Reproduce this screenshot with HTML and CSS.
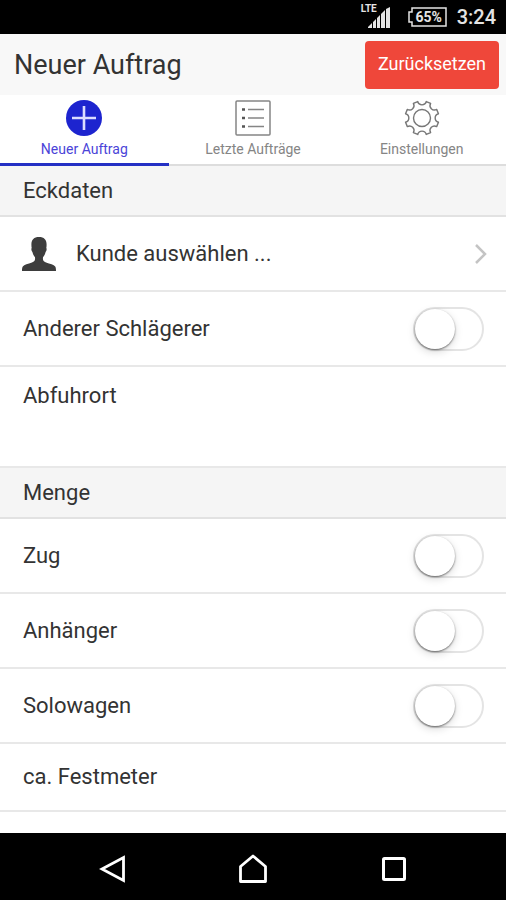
FILE: index.html
```html
<!DOCTYPE html>
<html lang="de">

<head>
    <meta charset="UTF-8">
    <meta name="viewport" content="width=device-width, initial-scale=1.0">
    <title>Neuer Auftrag</title>
    <link rel="stylesheet" href="styles.css">
</head>

<body>
    <div class="statusbar">
        <div class="signal">
            <span class="lte">LTE</span>
            <svg width="22" height="21" viewBox="0 0 22 21" fill="#e4e4e4">
                <path d="M0 21v-1l4-4v5zM5 21v-6l3-3v9zM9 21V11l3-3v13zM13 21V7l4-4v18zM18 21V2l4-2v21z" />
            </svg>
        </div>
        <div class="battery">
            <svg width="39" height="20" viewBox="0 0 39 20" fill="none" stroke="#e4e4e4" stroke-width="1.5">
                <path d="M4 1h34v18H4v-4H1V5h3z" />
            </svg>
            <span class="percent">65%</span>
        </div>
        <span class="time">3:24</span>
    </div>

    <header class="header">
        <h1>Neuer Auftrag</h1>
        <button type="button" class="btn-reset">Zurücksetzen</button>
    </header>

    <nav class="tabs">
        <a href="#neu" class="tab active">
            <svg width="38" height="38" viewBox="-19 -19 38 38">
                <circle r="18" fill="#1d24cf" />
                <path d="M-12 0h24M0-12v24" stroke="#dcdcff" stroke-width="2.6" />
            </svg>
            <span>Neuer Auftrag</span>
        </a>
        <a href="#letzte" class="tab">
            <svg width="38" height="38" viewBox="-19 -19 38 38" fill="none" stroke="#858585" stroke-width="1.5">
                <rect x="-17" y="-17" width="34" height="34" rx="1" />
                <path d="M-5-8.500h16M-5 0h16M-5 8.500h16" />
                <path d="M-11-8.500h3M-11 0h3M-11 8.500h3" stroke="#555" stroke-width="2.500" />
            </svg>
            <span>Letzte Aufträge</span>
        </a>
        <a href="#einstellungen" class="tab">
            <svg width="38" height="38" viewBox="-19 -19 38 38" fill="none" stroke="#777" stroke-width="1.4" stroke-linejoin="round">
                <path d="M4.260-16.460L8.630-14.650A4.400 4.400 0 0 0 14.650-8.630L16.460-4.260A4.400 4.400 0 0 0 16.460 4.260L14.650 8.630A4.400 4.400 0 0 0 8.630 14.650L4.260 16.460A4.400 4.400 0 0 0-4.260 16.460L-8.630 14.650A4.400 4.400 0 0 0-14.650 8.630L-16.460 4.260A4.400 4.400 0 0 0-16.460-4.260L-14.650-8.630A4.400 4.400 0 0 0-8.630-14.650L-4.260-16.460A4.400 4.400 0 0 0 4.260-16.460z" />
                <circle r="8.500" />
            </svg>
            <span>Einstellungen</span>
        </a>
    </nav>

    <main class="content">
        <h2>Eckdaten</h2>
        <a href="#kunde" class="row row-link">
            <svg class="person" width="34" height="34" viewBox="0 0 34 34" fill="#3d3d3d">
                <path d="M17 0c5 0 7.600 2.500 7.600 7.500 0 1.500-.1 2.500-.3 3.500.7.800.3 2.800-.7 4-.5 2.200-1.400 3.800-2.600 5.300-.4 3.200.5 4.400 3 5.300 4 1.300 7.800 1.900 9.200 4 .6 1 .8 2.400.8 4.400H0c0-2 .2-3.400.8-4.400 1.400-2.100 5.200-2.700 9.200-4 2.500-.9 3.400-2.100 3-5.300-1.200-1.500-2.100-3.100-2.600-5.300-1-1.200-1.400-3.200-.7-4-.2-1-.3-2-.3-3.500C9.400 2.500 12 0 17 0z" />
            </svg>
            <span class="label">Kunde auswählen ...</span>
            <svg width="14" height="20" viewBox="0 0 14 20" fill="none" stroke="#c4c4c4" stroke-width="2.500">
                <path d="M2 1l9 9-9 9" />
            </svg>
        </a>
        <div class="row">
            <label class="label" for="schlaegerer">Anderer Schlägerer</label>
            <input type="checkbox" class="toggle" id="schlaegerer">
        </div>
        <div class="row row-text">
            <label for="abfuhrort">Abfuhrort</label>
            <textarea id="abfuhrort"></textarea>
        </div>

        <h2>Menge</h2>
        <div class="row">
            <label class="label" for="zug">Zug</label>
            <input type="checkbox" class="toggle" id="zug">
        </div>
        <div class="row">
            <label class="label" for="anhaenger">Anhänger</label>
            <input type="checkbox" class="toggle" id="anhaenger">
        </div>
        <div class="row">
            <label class="label" for="solowagen">Solowagen</label>
            <input type="checkbox" class="toggle" id="solowagen">
        </div>
        <div class="row row-small">
            <label for="festmeter">ca. Festmeter</label>
            <input type="text" class="field" id="festmeter">
        </div>
    </main>

    <!-- Android Navigation -->
    <footer class="navbar">
        <button type="button" aria-label="Zurück">
            <svg width="30" height="30" viewBox="0 0 30 30" fill="none" stroke="#fff" stroke-width="2.800">
                <path d="M26.500 3.500v23L5 15z" />
            </svg>
        </button>
        <button type="button" aria-label="Start">
            <svg width="30" height="30" viewBox="0 0 30 30" fill="none" stroke="#fff" stroke-width="2.800" stroke-linejoin="round">
                <path d="M2.500 27.500v-15L15 2l12.500 10.500v15z" />
            </svg>
        </button>
        <button type="button" aria-label="Übersicht">
            <svg width="30" height="30" viewBox="0 0 30 30" fill="none" stroke="#fff" stroke-width="3">
                <rect x="4.500" y="4.500" width="21" height="21" rx="1" />
            </svg>
        </button>
    </footer>
</body>

</html>
```
FILE: styles.css
```css
* {
    box-sizing: border-box;
}

body {
    display: flex;
    flex-direction: column;
    min-height: 100vh;
    margin: 0;
    background-color: #fff;
    color: #333;
    font-family: Roboto, "Liberation Sans", sans-serif;
    font-size: 22px;
    line-height: 28px;
}

svg {
    display: block;
    flex: none;
}

a {
    color: inherit;
    text-decoration: none;
}

/* Statusleiste */
.statusbar {
    display: flex;
    justify-content: flex-end;
    align-items: center;
    height: 34px;
    padding-right: 10px;
    background-color: #000;
    color: #e4e4e4;
}

.signal {
    display: flex;
    align-items: flex-end;
    position: relative;
    height: 21px;
    padding-left: 7px;
    margin-right: 18px;
}

.lte {
    position: absolute;
    top: -3px;
    left: 0;
    font-size: 10px;
    font-weight: 700;
    line-height: 10px;
}

.battery {
    display: grid;
    align-items: center;
    justify-items: center;
    margin-right: 10px;
}

.battery > * {
    grid-area: 1 / 1;
}

.percent {
    padding-left: 3px;
    font-size: 14px;
    font-weight: 700;
    line-height: 20px;
}

.time {
    font-size: 20px;
    font-weight: 500;
}

/* Kopfzeile */
.header {
    display: flex;
    justify-content: space-between;
    align-items: center;
    height: 61px;
    padding: 0 7px 0 14px;
    background-color: #f8f8f8;
}

h1 {
    margin: 0;
    font-size: 27px;
    font-weight: 400;
    color: #333;
}

.btn-reset {
    height: 48px;
    padding: 0 13px 3px;
    border: none;
    border-radius: 4px;
    background-color: #ef473a;
    color: #fff;
    font-family: inherit;
    font-size: 18px;
}

.tabs {
    display: flex;
    height: 71px;
    border-bottom: 2px solid #ddd;
}

.tab {
    display: flex;
    flex: 1;
    flex-direction: column;
    align-items: center;
    padding-top: 4px;
    margin-bottom: -2px;
    font-size: 14px;
    line-height: 24px;
    color: #858585;
}

.tab.active {
    border-bottom: 3px solid #2430c4;
    color: #4a44d8;
}

/* Formular */
.content {
    flex: 1;
}

h2 {
    height: 51px;
    margin: 0;
    padding: 11px 23px;
    border-bottom: 2px solid #e2e2e2;
    background-color: #f5f5f5;
    font-size: 22px;
    font-weight: 400;
}

.row {
    display: flex;
    align-items: center;
    height: 75px;
    padding: 0 22px 0 23px;
    border-bottom: 2px solid #e8e8e8;
}

.row-link {
    padding: 0 18px 0 22px;
}

.label {
    flex: 1;
}

.person {
    margin-right: 20px;
}

.row-text {
    align-items: flex-start;
    height: 101px;
    padding-top: 15px;
}

.row-small {
    height: 68px;
}

.row textarea,
.field {
    flex: 1;
    min-width: 0;
    height: 60px;
    margin-left: 12px;
    padding: 0;
    border: none;
    outline: none;
    resize: none;
    background: none;
    font: inherit;
}

.toggle {
    appearance: none;
    width: 71px;
    height: 44px;
    margin: 0;
    border: 2px solid #e4e4e4;
    border-radius: 22px;
    background-color: #fff;
}

.toggle::before {
    content: "";
    display: block;
    width: 40px;
    height: 40px;
    border-radius: 50%;
    background-color: #fff;
    box-shadow: 0 1px 2px rgba(0, 0, 0, 0.5), 0 3px 8px rgba(0, 0, 0, 0.15);
}

.toggle:checked {
    background-color: #1d24cf;
}

.toggle:checked::before {
    margin-left: 27px;
}

.navbar {
    display: flex;
    justify-content: center;
    align-items: center;
    gap: 111px;
    height: 67px;
    padding-top: 4px;
    background-color: #000;
}

.navbar button {
    padding: 0;
    border: none;
    background: none;
}
```
